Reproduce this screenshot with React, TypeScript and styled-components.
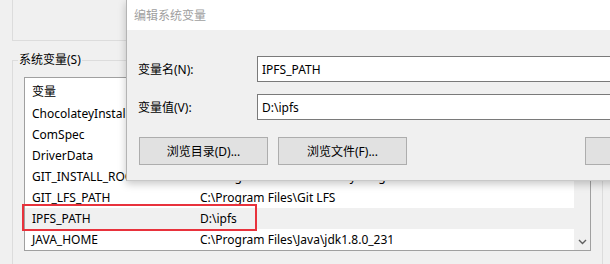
import styled, { createGlobalStyle } from "styled-components"

const GlobalStyle = createGlobalStyle`
  html, body {
    margin: 0;
    padding: 0;
    background: #f0f0f0;
  }
  body {
    font-family: "Noto Sans", "Noto Sans CJK SC", sans-serif;
    font-size: 12px;
    color: #000;
  }
  * {
    box-sizing: border-box;
  }
`

type Variable = {
  name: string
  value: string
  marked?: boolean
}

const variables: Variable[] = [
  { name: "ChocolateyInstall", value: "C:\\ProgramData\\chocolatey" },
  { name: "ComSpec", value: "C:\\Windows\\system32\\cmd.exe" },
  { name: "DriverData", value: "C:\\Windows\\System32\\Drivers\\DriverData" },
  { name: "GIT_INSTALL_ROOT", value: "C:\\ProgramData\\chocolatey\\lib\\git" },
  { name: "GIT_LFS_PATH", value: "C:\\Program Files\\Git LFS" },
  { name: "IPFS_PATH", value: "D:\\ipfs", marked: true },
  { name: "JAVA_HOME", value: "C:\\Program Files\\Java\\jdk1.8.0_231" },
]

const App = () => {
  return (
    <>
      <GlobalStyle />
      <Screen>
        <UserGroup />
        <SystemGroup>
          <Legend>系统变量(S)</Legend>
          <VarList>
            <Rows>
              <HeaderRow>
                <NameCell>变量</NameCell>
                <ValueCell>值</ValueCell>
              </HeaderRow>
              {variables.map((v) => (
                <Row key={v.name} $marked={v.marked}>
                  <NameCell>{v.name}</NameCell>
                  <ValueCell>{v.value}</ValueCell>
                  {v.marked && <RedMark />}
                </Row>
              ))}
            </Rows>
            <ScrollBar>
              <ArrowDown viewBox="0 0 9 6" width="9" height="6">
                <path d="M1 1 L4.5 4.5 L8 1" fill="none" stroke="#606060" strokeWidth="1.4" />
              </ArrowDown>
            </ScrollBar>
          </VarList>
        </SystemGroup>

        <Dialog>
          <TitleBar>编辑系统变量</TitleBar>
          <DialogBody>
            <FieldRow>
              <FieldLabel>变量名(N):</FieldLabel>
              <TextInput readOnly value="IPFS_PATH" />
            </FieldRow>
            <FieldRow>
              <FieldLabel>变量值(V):</FieldLabel>
              <TextInput readOnly value="D:\ipfs" />
            </FieldRow>
            <ButtonRow>
              <Button>浏览目录(D)...</Button>
              <Button>浏览文件(F)...</Button>
              <Button $push>确定</Button>
              <Button>取消</Button>
            </ButtonRow>
          </DialogBody>
        </Dialog>
      </Screen>
    </>
  )
}

export default App

const Screen = styled.div`
  position: relative;
  width: 610px;
  height: 264px;
  overflow: hidden;
  background: #f0f0f0;
`

const UserGroup = styled.div`
  height: 41px;
  margin-left: 12px;
  border-left: 1px solid #dcdcdc;
  border-bottom: 1px solid #dcdcdc;
`

const SystemGroup = styled.fieldset`
  margin: 11px 7px 0 12px;
  padding: 0 11px 0 11px;
  border: 1px solid #dcdcdc;
  height: 260px;
  min-width: 0;
`

const Legend = styled.legend`
  margin-left: -6px;
  padding: 0 1px;
  line-height: 16px;
  font-size: 12px;
`

const VarList = styled.div`
  display: grid;
  grid-template-columns: 1fr 16px;
  margin-top: 9px;
  height: 174px;
  background: #fff;
  border: 1px solid #a0a0a0;
`

const Rows = styled.div`
  display: flex;
  flex-direction: column;
  min-width: 0;
`

const HeaderRow = styled.div`
  display: grid;
  grid-template-columns: 175px 1fr;
  align-items: center;
  height: 25px;
`

const Row = styled.div<{ $marked?: boolean }>`
  position: relative;
  display: grid;
  grid-template-columns: 175px 1fr;
  align-items: center;
  height: 21px;
  background: ${(p) => (p.$marked ? "#f0f0f0" : "transparent")};
`

const NameCell = styled.span`
  padding-left: 7px;
  white-space: nowrap;
  overflow: hidden;
`

const ValueCell = styled.span`
  white-space: nowrap;
  overflow: hidden;
`

const RedMark = styled.span`
  position: absolute;
  left: -3px;
  top: -4px;
  width: 235px;
  height: 27px;
  border: 2px solid #e8323c;
  pointer-events: none;
`

const ScrollBar = styled.div`
  display: flex;
  align-items: flex-end;
  justify-content: center;
  padding-bottom: 5px;
  background: #f0f0f0;
`

const ArrowDown = styled.svg`
  display: block;
`

const Dialog = styled.div`
  position: absolute;
  left: 126px;
  top: 0;
  width: 640px;
  display: flex;
  flex-direction: column;
  border-left: 1px solid #b4b4b4;
  border-bottom: 1px solid #c8c8c8;
  box-shadow: 0 3px 8px rgba(0, 0, 0, 0.22);
`

const TitleBar = styled.div`
  height: 30px;
  display: flex;
  align-items: center;
  padding-left: 7px;
  background: #fff;
  color: #a0a0a0;
  font-size: 12px;
`

const DialogBody = styled.div`
  display: flex;
  flex-direction: column;
  gap: 12px;
  padding: 26px 11px 15px 11px;
  background: #f0f0f0;
`

const FieldRow = styled.div`
  display: flex;
  align-items: center;
`

const FieldLabel = styled.span`
  width: 119px;
  flex-shrink: 0;
`

const TextInput = styled.input`
  flex: 1;
  height: 26px;
  padding: 0 4px;
  border: 1px solid #7a7a7a;
  background: #fff;
  font-family: "Noto Sans", "Noto Sans CJK SC", sans-serif;
  font-size: 12px;
  color: #000;
  outline: none;
`

const ButtonRow = styled.div`
  display: flex;
  gap: 10px;
  margin-top: 5px;
  padding-left: 1px;
`

const Button = styled.button<{ $push?: boolean }>`
  width: ${(p) => (p.$push ? "90px" : "129px")};
  height: 28px;
  margin-left: ${(p) => (p.$push ? "168px" : "0")};
  padding: 0;
  border: 1px solid #adadad;
  background: #e1e1e1;
  font-family: "Noto Sans", "Noto Sans CJK SC", sans-serif;
  font-size: 12px;
  color: #000;
  flex-shrink: 0;
`
